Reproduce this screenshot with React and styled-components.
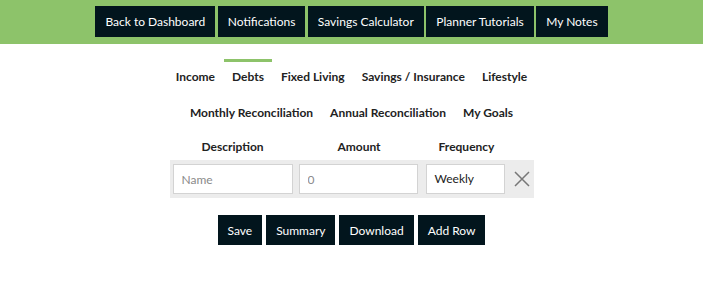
import React from "react";
import styled, { createGlobalStyle } from "styled-components";

const Global = createGlobalStyle`
  html, body { margin: 0; padding: 0; background: #fff; }
  body { font-family: Lato, "Open Sans", Arial, sans-serif; color: #222; }
  * { box-sizing: border-box; }
`;

const TopBar = styled.div`
  background: #8dc36a;
  height: 44px;
  padding-top: 6px;
  display: flex;
  justify-content: center;
  gap: 2.5px;
`;

const TopButton = styled.button`
  height: 31px;
  padding: 0 10px;
  border: none;
  background: #02151d;
  color: #fff;
  font-family: Lato, sans-serif;
  font-size: 12px;
  font-weight: 400;
  cursor: pointer;
`;

const TabRow = styled.div`
  display: flex;
  justify-content: center;
`;

const Tabs = styled.div`
  margin-top: 15px;
`;

const Tab = styled.div`
  border-top: 3px solid ${(p) => (p.$active ? "#8dc36a" : "transparent")};
  padding: 6px 8.5px 9px;
  line-height: 18px;
  font-size: 12px;
  font-weight: 700;
  color: #222;
  cursor: pointer;
`;

const Table = styled.div`
  width: 364px;
  margin: 7px auto 0;
`;

const HeaderRow = styled.div`
  display: grid;
  grid-template-columns: 126px 127px 88px 23px;
  line-height: 18px;
  font-size: 12px;
  font-weight: 700;
  text-align: center;
  margin-bottom: 4px;
`;

const DataRow = styled.div`
  background: #ececec;
  height: 38px;
  padding: 4px 3px;
  display: flex;
  align-items: center;
`;

const Input = styled.input`
  width: ${(p) => p.$w}px;
  margin-right: ${(p) => p.$mr}px;
  height: 30px;
  border: 1px solid #d3d3d3;
  background: #fff;
  padding: 0 8px;
  font-family: Lato, sans-serif;
  font-size: 12px;
  color: #333;
  outline: none;
  &::placeholder { color: #8a8a8a; }
`;

const Select = styled.div`
  width: 79px;
  height: 30px;
  border: 1px solid #d3d3d3;
  background: #fff;
  padding: 0 8px;
  font-size: 12px;
  line-height: 28px;
  color: #222;
`;

const RemoveButton = styled.button`
  margin-left: 8px;
  border: none;
  background: none;
  padding: 0;
  width: 18px;
  height: 18px;
  display: flex;
  align-items: center;
  justify-content: center;
  cursor: pointer;
`;

const Actions = styled.div`
  display: flex;
  justify-content: center;
  gap: 4px;
  margin-top: 17px;
`;

const ActionButton = styled.button`
  height: 30px;
  padding: 0 10px;
  border: none;
  background: #02151d;
  color: #fff;
  font-family: Lato, sans-serif;
  font-size: 12px;
  font-weight: 400;
  cursor: pointer;
`;

export default function App() {
  const top = ["Back to Dashboard", "Notifications", "Savings Calculator", "Planner Tutorials", "My Notes"];
  const row1 = ["Income", "Debts", "Fixed Living", "Savings / Insurance", "Lifestyle"];
  const row2 = ["Monthly Reconciliation", "Annual Reconciliation", "My Goals"];
  return (
    <>
      <Global />
      <TopBar>
        {top.map((t) => (
          <TopButton key={t}>{t}</TopButton>
        ))}
      </TopBar>
      <Tabs>
        <TabRow>
          {row1.map((t) => (
            <Tab key={t} $active={t === "Debts"}>{t}</Tab>
          ))}
        </TabRow>
        <TabRow>
          {row2.map((t) => (
            <Tab key={t}>{t}</Tab>
          ))}
        </TabRow>
      </Tabs>
      <Table>
        <HeaderRow>
          <div>Description</div>
          <div>Amount</div>
          <div>Frequency</div>
          <div />
        </HeaderRow>
        <DataRow>
          <Input $w={120} $mr={6} placeholder="Name" />
          <Input $w={119} $mr={8} placeholder="0" />
          <Select>Weekly</Select>
          <RemoveButton aria-label="Remove">
            <svg width="16" height="16" viewBox="0 0 16 16">
              <path d="M1 1 L15 15 M15 1 L1 15" stroke="#777" strokeWidth="1.5" fill="none" />
            </svg>
          </RemoveButton>
        </DataRow>
      </Table>
      <Actions>
        <ActionButton>Save</ActionButton>
        <ActionButton>Summary</ActionButton>
        <ActionButton>Download</ActionButton>
        <ActionButton>Add Row</ActionButton>
      </Actions>
    </>
  );
}
